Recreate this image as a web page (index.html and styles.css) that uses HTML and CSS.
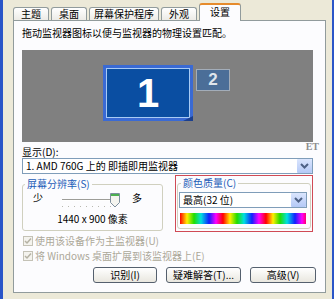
FILE: index.html
```html
<!DOCTYPE html>
<html lang="zh-CN">
<head>
    <meta charset="UTF-8">
    <meta name="viewport" content="width=device-width, initial-scale=1.0">
    <title>显示 属性</title>
    <link rel="stylesheet" href="styles.css">
</head>
<body>

    <div class="window">
        <div class="tabs">
            <div class="tab">主题</div>
            <div class="tab">桌面</div>
            <div class="tab">屏幕保护程序</div>
            <div class="tab">外观</div>
            <div class="tab active">设置</div>
        </div>

        <div class="page">
            <p class="hint">拖动监视器图标以便与监视器的物理设置匹配。</p>

            <div class="monitors">
                <div class="mon-sel"><div class="mon one">1</div></div>
                <div class="mon two">2</div>
            </div>

            <div class="label-row">
                <span>显示(<u>D</u>):</span>
                <span class="et">ET</span>
            </div>
            <div class="select">
                <span>1. AMD 760G 上的 即插即用监视器</span>
                <span class="arrow">
                    <svg width="15" height="14" viewBox="0 0 15 14"><polyline points="4,5 7.5,8.5 11,5" fill="none" stroke="#4d6185" stroke-width="2"/></svg>
                </span>
            </div>

            <div class="groups">
                <fieldset class="group res">
                    <legend>屏幕分辨率(<u>S</u>)</legend>
                    <div class="slider-row">
                        <span>少</span>
                        <svg class="slider" width="74" height="19" viewBox="0 0 74 19">
                            <line x1="10" y1="9.5" x2="63" y2="9.5" stroke="#9d9d98"/>
                            <line x1="10" y1="10.5" x2="63" y2="10.5" stroke="#ffffff"/>
                            <g fill="#b8b8b0">
                                <rect x="10" y="16" width="1" height="1"/>
                                <rect x="16" y="16" width="1" height="1"/>
                                <rect x="22" y="16" width="1" height="1"/>
                                <rect x="28" y="16" width="1" height="1"/>
                                <rect x="34" y="16" width="1" height="1"/>
                                <rect x="40" y="16" width="1" height="1"/>
                                <rect x="46" y="16" width="1" height="1"/>
                                <rect x="52" y="16" width="1" height="1"/>
                                <rect x="58" y="16" width="1" height="1"/>
                                <rect x="63" y="16" width="1" height="1"/>
                            </g>
                            <path d="M58.5 3.5 H67.5 V12.5 L63 17 L58.5 12.5 Z" fill="#f4f4ef" stroke="#7d8f9e"/>
                            <rect x="59" y="4" width="8" height="2" fill="#4caf50"/>
                        </svg>
                        <span class="more">多</span>
                    </div>
                    <div class="res-text">1440 x 900 像素</div>
                </fieldset>

                <div class="highlight">
                    <fieldset class="group color">
                        <legend>颜色质量(<u>C</u>)</legend>
                        <div class="select">
                            <span>最高(32 位)</span>
                            <span class="arrow">
                                <svg width="15" height="14" viewBox="0 0 15 14"><polyline points="4,5 7.5,8.5 11,5" fill="none" stroke="#4d6185" stroke-width="2"/></svg>
                            </span>
                        </div>
                        <div class="spectrum"></div>
                    </fieldset>
                </div>
            </div>

            <div class="check">
                <span class="box"><svg width="8" height="8" viewBox="0 0 8 8"><polyline points="1,4 3,6 7,1.5" fill="none" stroke="#b5b2a4" stroke-width="1.5"/></svg></span>
                <span>使用该设备作为主监视器(<u>U</u>)</span>
            </div>
            <div class="check">
                <span class="box"><svg width="8" height="8" viewBox="0 0 8 8"><polyline points="1,4 3,6 7,1.5" fill="none" stroke="#b5b2a4" stroke-width="1.5"/></svg></span>
                <span>将 Windows 桌面扩展到该监视器上(<u>E</u>)</span>
            </div>

            <div class="buttons">
                <button class="btn identify">识别(<u>I</u>)</button>
                <button class="btn trouble">疑难解答(<u>T</u>)...</button>
                <button class="btn advanced">高级(<u>V</u>)</button>
            </div>
        </div>
    </div>

</body>
</html>
```

FILE: styles.css
```css
* {
    box-sizing: border-box;
}
body {
    margin: 0;
    background: #ece9d8;
    color: #000;
    font-family: "Noto Sans CJK SC", "Liberation Sans", sans-serif;
    font-size: 10px;
}
u {
    text-decoration: none;
}
.window {
    width: 334px;
    height: 299px;
    border-left: 3px solid #2a55c8;
    border-right: 2px solid #2a55c8;
    overflow: hidden;
}

/* tabs */
.tabs {
    display: flex;
    align-items: flex-end;
    gap: 2px;
    height: 20px;
    padding-left: 10px;
}
.tab {
    min-width: 36px;
    height: 13px;
    padding: 0 4px;
    border: 1px solid #919b9c;
    border-bottom: none;
    border-radius: 3px 3px 0 0;
    background: linear-gradient(#ffffff, #ecebe6);
    line-height: 12px;
    text-align: center;
}
.tab.active {
    position: relative;
    min-width: 42px;
    height: 18px;
    margin-bottom: -1px;
    border-top: 2px solid #e68b2c;
    background: #fcfcfe;
    line-height: 14px;
}

/* page */
.page {
    height: 273px;
    margin: 0 6px 0 10px;
    padding: 6px 12px 0 8px;
    border: 1px solid #919b9c;
    background: #fcfcfe;
}
.hint {
    margin: 0;
    line-height: 12px;
}
.monitors {
    display: flex;
    align-items: flex-start;
    gap: 3px;
    height: 92px;
    margin-top: 11px;
    padding: 15px 0 0 81px;
    background: #808080;
}
.mon-sel {
    position: relative;
    width: 90px;
    height: 56px;
    padding: 3px;
    background: #3a6ad4;
}
.mon-sel::after {
    content: "";
    position: absolute;
    right: 0;
    bottom: 0;
    border-left: 10px solid transparent;
    border-bottom: 5px solid #1b3f8e;
}
.mon {
    display: flex;
    align-items: center;
    justify-content: center;
    font-family: "Liberation Sans", Arial, sans-serif;
    font-weight: bold;
}
.mon.one {
    height: 100%;
    border: 1px solid #a8cbf5;
    background: #0a4ea2;
    color: #fff;
    font-size: 40px;
}
.mon.two {
    width: 34px;
    height: 22px;
    margin-top: 4px;
    border: 1px solid #a3adb9;
    background: #4b6e98;
    color: #dfe5ec;
    font-size: 17px;
}

.label-row {
    display: flex;
    justify-content: space-between;
    margin-top: 4px;
    line-height: 12px;
}
.et {
    margin: -5px -6px 0 0;
    color: #8d8d8d;
    font-family: "Liberation Serif", serif;
    font-weight: bold;
}
.select {
    display: flex;
    align-items: center;
    height: 16px;
    padding-left: 3px;
    border: 1px solid #7f9db9;
    background: #fff;
    line-height: 14px;
}
.arrow {
    display: flex;
    width: 15px;
    height: 14px;
    margin-left: auto;
    border-radius: 1px;
    background: linear-gradient(#dae5fd, #b4c9f6);
}

/* group boxes */
.groups {
    display: flex;
    align-items: flex-start;
    gap: 12px;
    margin-top: 1px;
}
.group {
    min-width: 0;
    margin: 0;
    border: 1px solid #d0d0bf;
    border-radius: 3px;
}
.group legend {
    margin-left: 2px;
    padding: 0 2px;
    color: #1c5cb8;
    line-height: 12px;
}
.res {
    width: 141px;
    margin-top: 3px;
    padding: 0 0 5px 0;
}
.slider-row {
    display: flex;
    align-items: flex-start;
    height: 20px;
    padding: 2px 0 0 10px;
    line-height: 12px;
}
.slider {
    margin: -2px 0 0 9px;
}
.more {
    margin-left: 6px;
}
.res-text {
    margin-top: 3px;
    line-height: 12px;
    text-align: center;
}
.highlight {
    width: 138px;
    padding: 1px 1px 2px 1px;
    border: 1px solid #d04a55;
}
.color {
    padding: 0 3px 4px 1px;
}
.color .select {
    margin-top: 3px;
}
.spectrum {
    height: 11px;
    margin: 5px 1px 0 1px;
    background: repeating-linear-gradient(90deg, #ff0000 0, #ffee00 7px, #22dd00 14px, #00e0e0 21px, #1020ff 29px, #ff00ff 36px, #ff0000 43px);
}

/* checkboxes */
.check {
    display: flex;
    align-items: center;
    gap: 2px;
    margin-top: 3px;
    color: #aca899;
    line-height: 12px;
}
.box {
    display: flex;
    align-items: center;
    justify-content: center;
    width: 10px;
    height: 10px;
    margin-left: 1px;
    border: 1px solid #c4c2b6;
    background: #f4f3ee;
}

/* buttons */
.buttons {
    display: flex;
    gap: 9px;
    margin-top: 5px;
    padding-left: 71px;
}
.btn {
    height: 16px;
    padding: 0;
    border: 1px solid #55606e;
    border-radius: 3px;
    background: linear-gradient(#ffffff, #e9e7df);
    color: #000;
    font-family: inherit;
    font-size: 10px;
    line-height: 14px;
}
.identify {
    width: 64px;
}
.trouble {
    width: 75px;
}
.advanced {
    width: 66px;
    margin-right: -3px;
}
```
